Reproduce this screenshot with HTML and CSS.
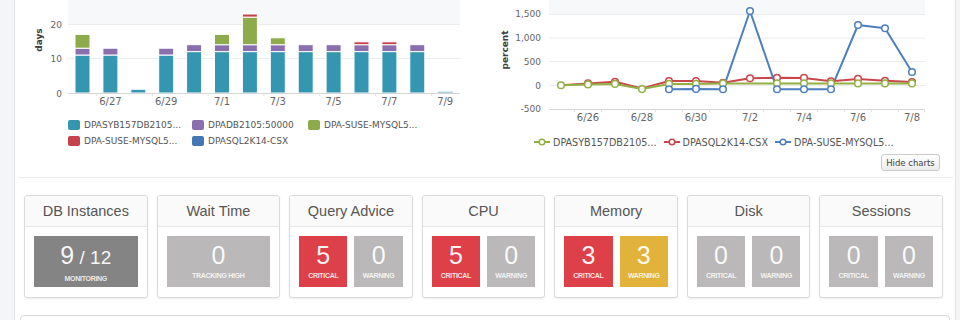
FILE: index.html
```html
<!DOCTYPE html>
<html>
<head>
<meta charset="utf-8">
<title>Dashboard</title>
<link rel="stylesheet" href="styles.css">
</head>
<body>
<div class="main">
  <section class="charts">
    <div class="chart chart-left">
      <svg class="plot" width="462" height="117" viewBox="18 0 462 117">
        <rect x="68" y="0" width="392" height="24" fill="#f7f8f9"/>
        <g stroke="#ececec" stroke-width="1">
          <line x1="68" y1="24.5" x2="460" y2="24.5"/>
          <line x1="68" y1="58.5" x2="460" y2="58.5"/>
        </g>
        <g class="ylab" text-anchor="end">
          <text x="62" y="27.5">20</text>
          <text x="62" y="62">10</text>
          <text x="62" y="96.5">0</text>
        </g>
        <text class="atitle" transform="translate(42,40) rotate(-90)" text-anchor="middle">days</text>
        <g stroke="#fff" stroke-width="1">
          <rect x="75" y="55" width="15" height="38" fill="#3596b1"/>
          <rect x="75" y="48.2" width="15" height="6.8" fill="#8a6fae"/>
          <rect x="75" y="34.4" width="15" height="13.8" fill="#8dab4b"/>

          <rect x="102.9" y="55" width="15" height="38" fill="#3596b1"/>
          <rect x="102.9" y="48.2" width="15" height="6.8" fill="#8a6fae"/>

          <rect x="130.8" y="89.3" width="15" height="3.7" fill="#3596b1"/>

          <rect x="158.7" y="55" width="15" height="38" fill="#3596b1"/>
          <rect x="158.7" y="48.2" width="15" height="6.8" fill="#8a6fae"/>

          <rect x="186.6" y="51.6" width="15" height="41.4" fill="#3596b1"/>
          <rect x="186.6" y="44.7" width="15" height="6.9" fill="#8a6fae"/>

          <rect x="214.5" y="51.6" width="15" height="41.4" fill="#3596b1"/>
          <rect x="214.5" y="44.7" width="15" height="6.9" fill="#8a6fae"/>
          <rect x="214.5" y="34.4" width="15" height="10.3" fill="#8dab4b"/>

          <rect x="242.4" y="51.6" width="15" height="41.4" fill="#3596b1"/>
          <rect x="242.4" y="44.7" width="15" height="6.9" fill="#8a6fae"/>
          <rect x="242.4" y="17.1" width="15" height="27.6" fill="#8dab4b"/>
          <rect x="242.4" y="14" width="15" height="3.1" fill="#c6434b"/>

          <rect x="270.3" y="51.6" width="15" height="41.4" fill="#3596b1"/>
          <rect x="270.3" y="44.7" width="15" height="6.9" fill="#8a6fae"/>
          <rect x="270.3" y="37.8" width="15" height="6.9" fill="#8dab4b"/>

          <rect x="298.2" y="51.6" width="15" height="41.4" fill="#3596b1"/>
          <rect x="298.2" y="44.7" width="15" height="6.9" fill="#8a6fae"/>

          <rect x="326.1" y="51.6" width="15" height="41.4" fill="#3596b1"/>
          <rect x="326.1" y="44.7" width="15" height="6.9" fill="#8a6fae"/>

          <rect x="354" y="51.6" width="15" height="41.4" fill="#3596b1"/>
          <rect x="354" y="44.7" width="15" height="6.9" fill="#8a6fae"/>
          <rect x="354" y="41.8" width="15" height="2.9" fill="#c6434b"/>

          <rect x="381.9" y="51.6" width="15" height="41.4" fill="#3596b1"/>
          <rect x="381.9" y="44.7" width="15" height="6.9" fill="#8a6fae"/>
          <rect x="381.9" y="41.8" width="15" height="2.9" fill="#c6434b"/>

          <rect x="409.8" y="51.6" width="15" height="41.4" fill="#3596b1"/>
          <rect x="409.8" y="44.7" width="15" height="6.9" fill="#8a6fae"/>
        </g>
        <rect x="437.7" y="91.6" width="15" height="1.4" fill="#a6d2de"/>
        <line x1="68" y1="93.5" x2="460" y2="93.5" stroke="#d6d6d6"/>
        <g stroke="#e2e2e2">
          <line x1="96.5" y1="93.5" x2="96.5" y2="96"/>
          <line x1="152.3" y1="93.5" x2="152.3" y2="96"/>
          <line x1="208.1" y1="93.5" x2="208.1" y2="96"/>
          <line x1="263.9" y1="93.5" x2="263.9" y2="96"/>
          <line x1="319.7" y1="93.5" x2="319.7" y2="96"/>
          <line x1="375.5" y1="93.5" x2="375.5" y2="96"/>
          <line x1="431.3" y1="93.5" x2="431.3" y2="96"/>
        </g>
        <g class="xlab" text-anchor="middle">
          <text x="110.4" y="104.6">6/27</text>
          <text x="166.2" y="104.6">6/29</text>
          <text x="222" y="104.6">7/1</text>
          <text x="277.8" y="104.6">7/3</text>
          <text x="333.6" y="104.6">7/5</text>
          <text x="389.4" y="104.6">7/7</text>
          <text x="445.2" y="104.6">7/9</text>
        </g>
      </svg>
      <div class="legend legend-bars">
        <span class="item"><i class="sw teal"></i>DPASYB157DB2105...</span>
        <span class="item"><i class="sw purple"></i>DPADB2105:50000</span>
        <span class="item"><i class="sw green"></i>DPA-SUSE-MYSQL5...</span>
        <span class="item"><i class="sw red"></i>DPA-SUSE-MYSQL5...</span>
        <span class="item"><i class="sw blue"></i>DPASQL2K14-CSX</span>
      </div>
    </div>

    <div class="chart chart-right">
      <svg class="plot" width="472" height="130" viewBox="480 0 472 130">
        <rect x="549" y="0" width="376" height="14" fill="#f7f8f9"/>
        <g stroke="#ececec" stroke-width="1">
          <line x1="549" y1="14.5" x2="925" y2="14.5"/>
          <line x1="549" y1="38" x2="925" y2="38"/>
          <line x1="549" y1="61.5" x2="925" y2="61.5"/>
          <line x1="549" y1="85.5" x2="925" y2="85.5"/>
        </g>
        <g class="ylab" text-anchor="end">
          <text x="541" y="17.4">1,500</text>
          <text x="541" y="41.1">1,000</text>
          <text x="541" y="64.9">500</text>
          <text x="541" y="88.6">0</text>
          <text x="541" y="112.3">-500</text>
        </g>
        <text class="atitle" transform="translate(508,50) rotate(-90)" text-anchor="middle">percent</text>
        <line x1="549" y1="109.5" x2="925" y2="109.5" stroke="#d6d6d6"/>
        <g stroke="#e2e2e2">
          <line x1="574.5" y1="109.5" x2="574.5" y2="112"/>
          <line x1="601.5" y1="109.5" x2="601.5" y2="112"/>
          <line x1="628.5" y1="109.5" x2="628.5" y2="112"/>
          <line x1="655.5" y1="109.5" x2="655.5" y2="112"/>
          <line x1="682.5" y1="109.5" x2="682.5" y2="112"/>
          <line x1="709.5" y1="109.5" x2="709.5" y2="112"/>
          <line x1="736.5" y1="109.5" x2="736.5" y2="112"/>
          <line x1="763.5" y1="109.5" x2="763.5" y2="112"/>
          <line x1="790.5" y1="109.5" x2="790.5" y2="112"/>
          <line x1="817.5" y1="109.5" x2="817.5" y2="112"/>
          <line x1="844.5" y1="109.5" x2="844.5" y2="112"/>
          <line x1="871.5" y1="109.5" x2="871.5" y2="112"/>
          <line x1="898.5" y1="109.5" x2="898.5" y2="112"/>
          <line x1="924.5" y1="109.5" x2="924.5" y2="112"/>
        </g>
        <g class="xlab" text-anchor="middle">
          <text x="588" y="120.6">6/26</text>
          <text x="642" y="120.6">6/28</text>
          <text x="696" y="120.6">6/30</text>
          <text x="750" y="120.6">7/2</text>
          <text x="804" y="120.6">7/4</text>
          <text x="858" y="120.6">7/6</text>
          <text x="912" y="120.6">7/8</text>
        </g>
        <g fill="none" stroke-width="2" stroke-linejoin="round">
          <polyline stroke="#c9464d" points="561,85.3 588,83.4 615,81.7 642,88.4 669,81 696,81 723,82.7 750,78.2 777,77.7 804,77.9 831,81.3 858,78.9 885,80.8 912,82"/>
          <polyline stroke="#92b043" points="561,85.3 588,84.4 615,83.9 642,89.1 669,83.9 696,83.9 723,83.4 750,83.4 777,83.4 804,83.4 831,83.4 858,83.4 885,83.4 912,83.4"/>
          <polyline stroke="#4d7fbf" points="669,89.3 696,88.9 723,89.3 750,11 777,89.3 804,89.3 831,89.3 858,25 885,28.3 912,72"/>
        </g>
        <g fill="#fff" stroke-width="1.5">
          <g stroke="#c9464d">
            <circle cx="588" cy="83.4" r="3.3"/><circle cx="615" cy="81.7" r="3.3"/>
            <circle cx="669" cy="81" r="3.3"/><circle cx="696" cy="81" r="3.3"/><circle cx="723" cy="82.7" r="3.3"/>
            <circle cx="750" cy="78.2" r="3.3"/><circle cx="777" cy="77.7" r="3.3"/><circle cx="804" cy="77.9" r="3.3"/>
            <circle cx="831" cy="81.3" r="3.3"/><circle cx="858" cy="78.9" r="3.3"/><circle cx="885" cy="80.8" r="3.3"/>
            <circle cx="912" cy="82" r="3.3"/>
          </g>
          <g stroke="#92b043">
            <circle cx="561" cy="85.3" r="3.3"/><circle cx="588" cy="84.4" r="3.3"/><circle cx="615" cy="83.9" r="3.3"/>
            <circle cx="642" cy="89.1" r="3.3"/><circle cx="669" cy="83.9" r="3.3"/><circle cx="696" cy="83.9" r="3.3"/>
            <circle cx="723" cy="83.4" r="3.3"/><circle cx="777" cy="83.4" r="3.3"/><circle cx="804" cy="83.4" r="3.3"/>
            <circle cx="831" cy="83.4" r="3.3"/><circle cx="858" cy="83.4" r="3.3"/><circle cx="885" cy="83.4" r="3.3"/>
            <circle cx="912" cy="83.4" r="3.3"/>
          </g>
          <g stroke="#4d7fbf">
            <circle cx="669" cy="89.3" r="3.3"/><circle cx="696" cy="88.9" r="3.3"/><circle cx="723" cy="89.3" r="3.3"/>
            <circle cx="750" cy="11" r="3.3"/><circle cx="777" cy="89.3" r="3.3"/><circle cx="804" cy="89.3" r="3.3"/>
            <circle cx="831" cy="89.3" r="3.3"/><circle cx="858" cy="25" r="3.3"/><circle cx="885" cy="28.3" r="3.3"/>
            <circle cx="912" cy="72" r="3.3"/>
          </g>
        </g>
      </svg>
      <div class="legend legend-lines">
        <span class="item"><svg class="mk" width="16" height="8" viewBox="0 0 16 8"><line x1="0" y1="4" x2="16" y2="4" stroke="#92b043" stroke-width="2"/><circle cx="8" cy="4" r="2.8" fill="#fff" stroke="#92b043" stroke-width="1.5"/></svg>DPASYB157DB2105...</span>
        <span class="item"><svg class="mk" width="16" height="8" viewBox="0 0 16 8"><line x1="0" y1="4" x2="16" y2="4" stroke="#c9464d" stroke-width="2"/><circle cx="8" cy="4" r="2.8" fill="#fff" stroke="#c9464d" stroke-width="1.5"/></svg>DPASQL2K14-CSX</span>
        <span class="item"><svg class="mk" width="16" height="8" viewBox="0 0 16 8"><line x1="0" y1="4" x2="16" y2="4" stroke="#4d7fbf" stroke-width="2"/><circle cx="8" cy="4" r="2.8" fill="#fff" stroke="#4d7fbf" stroke-width="1.5"/></svg>DPA-SUSE-MYSQL5...</span>
      </div>
      <div class="actions"><button class="btn" type="button">Hide charts</button></div>
    </div>
  </section>

  <section class="cards">
    <div class="card">
      <div class="card-title">DB Instances</div>
      <div class="card-body">
        <div class="tile dark"><div class="num">9<span class="frac"> / 12</span></div><div class="lbl">Monitoring</div></div>
      </div>
    </div>
    <div class="card">
      <div class="card-title">Wait Time</div>
      <div class="card-body">
        <div class="tile grey"><div class="num">0</div><div class="lbl">Tracking High</div></div>
      </div>
    </div>
    <div class="card">
      <div class="card-title">Query Advice</div>
      <div class="card-body">
        <div class="tile red"><div class="num">5</div><div class="lbl">Critical</div></div>
        <div class="tile grey"><div class="num">0</div><div class="lbl">Warning</div></div>
      </div>
    </div>
    <div class="card">
      <div class="card-title">CPU</div>
      <div class="card-body">
        <div class="tile red"><div class="num">5</div><div class="lbl">Critical</div></div>
        <div class="tile grey"><div class="num">0</div><div class="lbl">Warning</div></div>
      </div>
    </div>
    <div class="card">
      <div class="card-title">Memory</div>
      <div class="card-body">
        <div class="tile red"><div class="num">3</div><div class="lbl">Critical</div></div>
        <div class="tile yellow"><div class="num">3</div><div class="lbl">Warning</div></div>
      </div>
    </div>
    <div class="card">
      <div class="card-title">Disk</div>
      <div class="card-body">
        <div class="tile grey"><div class="num">0</div><div class="lbl">Critical</div></div>
        <div class="tile grey"><div class="num">0</div><div class="lbl">Warning</div></div>
      </div>
    </div>
    <div class="card">
      <div class="card-title">Sessions</div>
      <div class="card-body">
        <div class="tile grey"><div class="num">0</div><div class="lbl">Critical</div></div>
        <div class="tile grey"><div class="num">0</div><div class="lbl">Warning</div></div>
      </div>
    </div>
  </section>

  <div class="panel"></div>
</div>
</body>
</html>
```

FILE: styles.css
```css
html, body {
  margin: 0;
  padding: 0;
}
body {
  background: #f4f5f7;
  font-family: "Liberation Sans", Arial, sans-serif;
  height: 320px;
  overflow: hidden;
}
.main {
  margin-left: 14px;
  width: 940px;
  height: 320px;
  overflow: hidden;
  background: #fff;
  border-left: 1px solid #e2e3e6;
  border-right: 1px solid #e2e3e6;
}
.charts {
  display: flex;
  height: 177px;
  margin: 0 2px 0 3px;
  border-bottom: 1px solid #ebebeb;
}
.chart-left {
  width: 462px;
  flex: none;
}
.chart-right {
  flex: 1;
}
.plot {
  display: block;
}
.ylab text {
  font-family: "DejaVu Sans", sans-serif;
  font-size: 9px;
  fill: #666;
}
.xlab text {
  font-family: "DejaVu Sans", sans-serif;
  font-size: 10px;
  fill: #666;
}
.atitle {
  font-family: "DejaVu Sans", sans-serif;
  font-size: 9px;
  fill: #3d3d3d;
  font-weight: bold;
}
.legend {
  font-family: "DejaVu Sans", sans-serif;
  color: #555;
}
.legend-bars {
  display: grid;
  grid-template-columns: 124px 116px auto;
  grid-auto-rows: 16px;
  align-items: center;
  padding-left: 50px;
  font-size: 9px;
}
.item {
  display: flex;
  align-items: center;
  white-space: nowrap;
}
.sw {
  display: inline-block;
  width: 12px;
  height: 10px;
  border-radius: 2px;
  margin-right: 4px;
}
.sw.teal { background: #3596b1; }
.sw.purple { background: #8a6fae; }
.sw.green { background: #8dab4b; }
.sw.red { background: #c6434b; }
.sw.blue { background: #4577b4; }

.legend-lines {
  display: flex;
  gap: 7px;
  height: 16px;
  align-items: center;
  margin-top: 4px;
  padding-left: 54px;
  font-size: 9.6px;
}
.mk {
  display: block;
  margin-right: 3px;
}
.actions {
  display: flex;
  justify-content: flex-end;
  padding-right: 13px;
  margin-top: 4px;
}
.btn {
  width: 59px;
  height: 17px;
  padding: 0;
  font-family: "DejaVu Sans", sans-serif;
  font-size: 8.5px;
  color: #444;
  border: 1px solid #c9c9c9;
  border-radius: 3px;
  background: linear-gradient(#ffffff, #ececec);
}

.cards {
  display: flex;
  gap: 9px;
  padding: 0 12px 0 9px;
  margin-top: 17px;
}
.card {
  flex: 1;
  min-width: 0;
  border: 1px solid #dadada;
  border-radius: 3px;
  background: #fff;
  box-shadow: 0 1px 2px rgba(0, 0, 0, 0.07);
  overflow: hidden;
}
.card-title {
  height: 30px;
  line-height: 31px;
  text-align: center;
  font-size: 14.5px;
  color: #555;
  background: #fafafa;
  border-bottom: 1px solid #e7e7e7;
}
.card-body {
  display: flex;
  gap: 7px;
  padding: 9px 9px 10px;
}
.tile {
  flex: 1;
  height: 51px;
  display: flex;
  flex-direction: column;
  align-items: center;
  color: #fff;
}
.tile.dark { background: #858484; }
.tile.grey { background: #bab8b8; }
.tile.red { background: #dd4049; }
.tile.yellow { background: #e2b33a; }
.num {
  font-size: 25px;
  line-height: 28px;
  margin-top: 5px;
  color: rgba(255, 255, 255, 0.95);
}
.frac {
  font-size: 19px;
}
.lbl {
  font-size: 7px;
  line-height: 10px;
  margin-top: 2px;
  font-weight: bold;
  text-transform: uppercase;
  letter-spacing: -0.3px;
  color: rgba(255, 255, 255, 0.85);
  white-space: nowrap;
}
.panel {
  margin: 17px 5px 0;
  height: 10px;
  border: 1px solid #dcdcdc;
  border-radius: 4px;
}
```
